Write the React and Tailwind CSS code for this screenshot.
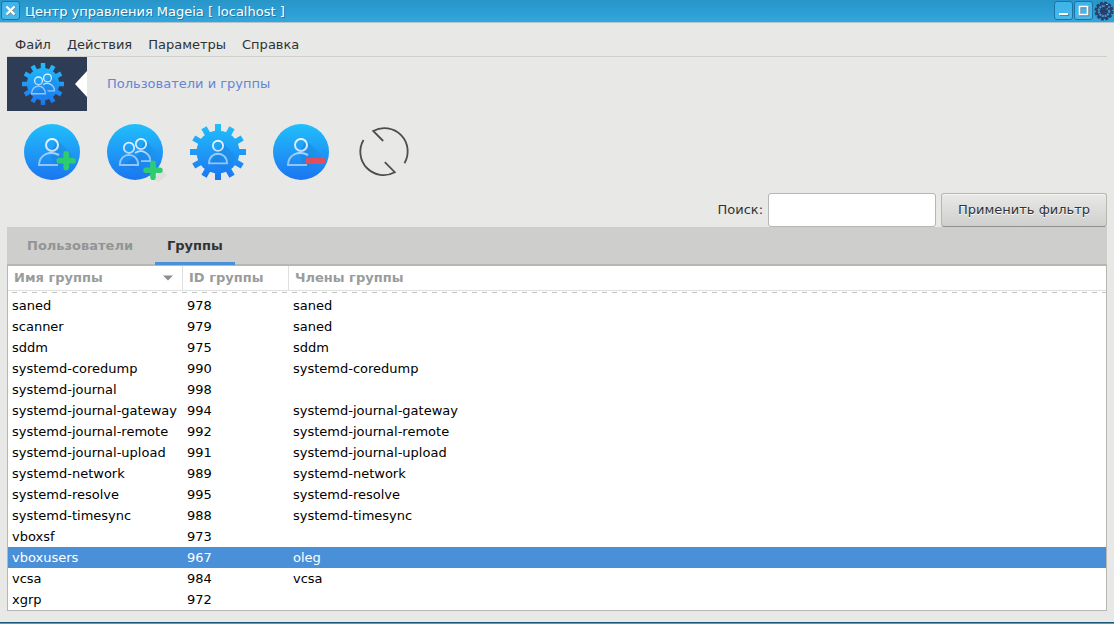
import React from 'react'

const groups = [
  { name: 'saned', id: 978, members: 'saned' },
  { name: 'scanner', id: 979, members: 'saned' },
  { name: 'sddm', id: 975, members: 'sddm' },
  { name: 'systemd-coredump', id: 990, members: 'systemd-coredump' },
  { name: 'systemd-journal', id: 998, members: '' },
  { name: 'systemd-journal-gateway', id: 994, members: 'systemd-journal-gateway' },
  { name: 'systemd-journal-remote', id: 992, members: 'systemd-journal-remote' },
  { name: 'systemd-journal-upload', id: 991, members: 'systemd-journal-upload' },
  { name: 'systemd-network', id: 989, members: 'systemd-network' },
  { name: 'systemd-resolve', id: 995, members: 'systemd-resolve' },
  { name: 'systemd-timesync', id: 988, members: 'systemd-timesync' },
  { name: 'vboxsf', id: 973, members: '' },
  { name: 'vboxusers', id: 967, members: 'oleg', selected: true },
  { name: 'vcsa', id: 984, members: 'vcsa' },
  { name: 'xgrp', id: 972, members: '' },
]

const menus = ['Файл', 'Действия', 'Параметры', 'Справка']

const teeth = [0, 30, 60, 90, 120, 150]

// Shared gradients, referenced by every icon on the page
const Gradients = () => (
  <svg className="absolute w-0 h-0" aria-hidden="true">
    <defs>
      <linearGradient id="blue" gradientUnits="userSpaceOnUse" x1="0" y1="0" x2="0" y2="56">
        <stop offset="0" stopColor="#21bffb" />
        <stop offset="1" stopColor="#1b75f0" />
      </linearGradient>
      <linearGradient id="shade" gradientUnits="userSpaceOnUse" x1="22" y1="22" x2="44" y2="44">
        <stop offset="0" stopColor="#1560b8" stopOpacity="0.35" />
        <stop offset="1" stopColor="#1560b8" stopOpacity="0" />
      </linearGradient>
      <linearGradient id="line" gradientUnits="userSpaceOnUse" x1="0" y1="14" x2="0" y2="42">
        <stop offset="0" stopColor="#f4fbff" />
        <stop offset="0.45" stopColor="#c4e1fd" />
        <stop offset="0.6" stopColor="#9bcbfb" />
        <stop offset="1" stopColor="#8fc3fa" />
      </linearGradient>
    </defs>
  </svg>
)

const Gear = () => (
  <g fill="url(#blue)">
    <path
      d={teeth
        .map((t) => {
          const a = (t * Math.PI) / 180
          const p = (x, y) =>
            `${(28 + x * Math.cos(a) - y * Math.sin(a)).toFixed(2)} ${(28 + x * Math.sin(a) + y * Math.cos(a)).toFixed(2)}`
          return `M${p(-3, -28)}L${p(3, -28)}L${p(3, -20)}L${p(-3, -20)}ZM${p(-3, 20)}L${p(3, 20)}L${p(3, 28)}L${p(-3, 28)}Z`
        })
        .join('')}
    />
    <circle cx="28" cy="28" r="21.5" />
  </g>
)

const UserFigure = () => (
  <>
    <path d="M33 16L49 31L42 46L30 42L27 28Z" fill="url(#shade)" />
    <g fill="none" stroke="url(#line)" strokeWidth="2">
      <circle cx="28" cy="21" r="6" />
      <path d="M35 31C26 26.5 15.5 30 15 41H34" />
    </g>
  </>
)

const PairFigure = () => (
  <>
    <path d="M38 16L52 30L46 40L34 48L16 41L32 30Z" fill="url(#shade)" />
    <g fill="none" stroke="url(#line)" strokeWidth="1.8">
      <circle cx="22" cy="23.8" r="5.2" />
      <path d="M12.8 41C12.800 27.500 31.200 27.500 31.200 41Z" />
      <circle cx="34" cy="20" r="5.2" />
      <path d="M28 29C35 24.5 43.3 29.5 43.3 37.1H34" />
    </g>
  </>
)

const Icon = ({ size = 56, children }) => (
  <svg width={size} height={size} viewBox="0 0 56 56" className="block overflow-visible" aria-hidden="true">
    {children}
  </svg>
)

const AddUserIcon = () => (
  <Icon>
    <circle cx="28" cy="28" r="28" fill="url(#blue)" />
    <UserFigure />
    <path d="M42.2 29.8V43.6M35.3 36.7H49.1" stroke="#2ecc71" strokeWidth="5.6" strokeLinecap="round" />
  </Icon>
)

const AddGroupIcon = () => (
  <Icon>
    <circle cx="28" cy="28" r="28" fill="url(#blue)" />
    <PairFigure />
    <path d="M54 45L60 51L52 58L46 56Z" fill="#000" opacity="0.04" />
    <path d="M46 39.4V53.2M39.1 46.2H52.9" stroke="#2ecc71" strokeWidth="5.6" strokeLinecap="round" />
  </Icon>
)

const EditIcon = () => (
  <Icon>
    <Gear />
    <path d="M33 19L47 33L37 47L20 40L27 28Z" fill="url(#shade)" />
    <g fill="none" stroke="url(#line)" strokeWidth="1.9">
      <circle cx="28" cy="21.8" r="5.1" />
      <path d="M19 39.4C19 26.5 37 26.5 37 39.4Z" />
    </g>
  </Icon>
)

const RemoveIcon = () => (
  <Icon>
    <circle cx="28" cy="28" r="28" fill="url(#blue)" />
    <UserFigure />
    <rect x="32.3" y="34" width="20" height="6" rx="2" fill="#e04f5f" />
  </Icon>
)

const RefreshIcon = () => (
  <Icon>
    <g fill="none" stroke="#4d4d4d" strokeWidth="1.8">
      <path d="M27.2 17L17.2 7A23.3 23.3 0 0 1 48.500 39.2" />
      <path d="M28.8 38.2L38.8 48.2A23.3 23.3 0 0 1 7.5 16" />
    </g>
  </Icon>
)

const tools = [
  { label: 'Добавить пользователя', icon: AddUserIcon },
  { label: 'Добавить группу', icon: AddGroupIcon },
  { label: 'Редактировать', icon: EditIcon },
  { label: 'Удалить', icon: RemoveIcon },
  { label: 'Обновить', icon: RefreshIcon },
]

const windowButton =
  'w-[19px] h-[19px] rounded-[3px] border border-[#1b75a4] bg-gradient-to-b from-[#3fb4ea] to-[#46b8ec] flex items-center justify-center'

const TitleBar = () => (
  <header className="h-[23px] flex items-center pl-px pb-px bg-gradient-to-b from-[#2795c8] to-[#32a6dd] border-b border-[#b5c4cb] text-white">
    <button aria-label="Закрыть" className={windowButton}>
      <svg width="13" height="13" viewBox="0 0 13 13">
        <path d="M3 3L11 11M11 3L3 11" stroke="#777" strokeWidth="2.4" />
        <path d="M2.5 2.5L10.5 10.5M10.5 2.500L2.500 10.500" stroke="#fff" strokeWidth="2.4" />
      </svg>
    </button>
    <h1 className="grow pl-[5px] pt-0.5 [text-shadow:1px_1px_0_#1f77a3]">Центр управления Mageia [ localhost ]</h1>
    <div className="flex items-center gap-px">
      <button aria-label="Свернуть" className={windowButton}>
        <svg width="13" height="13" viewBox="0 0 13 13">
          <path d="M3 10H12V12H3Z" fill="#777" />
          <path d="M2 9H11V11H2Z" fill="#fff" />
        </svg>
      </button>
      <button aria-label="Развернуть" className={windowButton}>
        <svg width="13" height="13" viewBox="0 0 13 13" fill="none">
          <path d="M3 3.5H11.5V11.5H3Z" stroke="#777" strokeWidth="1.6" />
          <path d="M2.5 2.5H10.500V10.500H2.500Z" stroke="#fff" strokeWidth="1.6" />
        </svg>
      </button>
      <button aria-label="Меню окна" className="w-5 h-5">
        <svg width="20" height="20" viewBox="0 0 20 20" fill="none">
          <circle cx="10" cy="10" r="8.5" stroke="#27406b" strokeWidth="2" strokeDasharray="3 1.45" />
          <circle cx="10" cy="10" r="8" fill="#27406b" />
          <circle cx="10" cy="10" r="5.2" stroke="#4794c8" strokeWidth="2.2" strokeDasharray="2 0.7" />
          <circle cx="10" cy="10" r="3" fill="#27406b" />
          <path d="M10 10L12 1L19 8Z" fill="#27406b" />
          <path d="M12 3.5H14M14 6H16M12.500 8H14" stroke="#7fb9e0" strokeWidth="1.2" />
        </svg>
      </button>
    </div>
  </header>
)

const Banner = () => (
  <div className="flex items-center">
    <div className="w-20 h-[54px] bg-[#2f3c56] flex items-center justify-between pl-[15px]">
      <Icon size={42}>
        <Gear />
        <PairFigure />
      </Icon>
      <svg width="12" height="26" viewBox="0 0 12 26" className="block">
        <path d="M12 0V26L0 13Z" fill="#fff" />
      </svg>
    </div>
    <h2 className="pl-5 text-[#5f87d7]">Пользователи и группы</h2>
  </div>
)

const GroupsTable = () => (
  <div className="bg-white border border-t-2 border-[#b6b6b3]">
    <table className="w-full table-fixed border-separate border-spacing-0 text-left text-black">
      <colgroup>
        <col className="w-[175px]" />
        <col className="w-[106px]" />
        <col />
      </colgroup>
      <thead>
        <tr className="h-[25px] text-[#999c9b]">
          <th className="py-0 pl-1.5 pr-2 font-bold border-r border-b border-[#dfdfdd]">
            <div className="flex items-center justify-between">
              Имя группы
              <svg width="12" height="6" viewBox="0 0 12 6" className="block">
                <path d="M1 0.5H11L6 5.5Z" fill="#8b8e8f" />
              </svg>
            </div>
          </th>
          <th className="py-0 px-1.5 font-bold border-r border-b border-[#dfdfdd]">ID группы</th>
          <th className="py-0 px-1.5 font-bold border-b border-[#dfdfdd]">Члены группы</th>
        </tr>
        <tr className="h-1">
          <td colSpan={3} className="p-0">
            <div className="h-1 pt-px pl-1">
              <div className="h-px bg-[repeating-linear-gradient(90deg,#c4c4c4_0_5px,transparent_5px_10px)]" />
            </div>
          </td>
        </tr>
      </thead>
      <tbody className="leading-5">
        {groups.map((g) => (
          <tr key={g.name} className={g.selected ? 'h-[21px] bg-[#4a90d9] text-white' : 'h-[21px]'}>
            <td className="pt-px pb-0 pl-1 whitespace-nowrap">{g.name}</td>
            <td className="pt-px pb-0 pl-1">{g.id}</td>
            <td className="pt-px pb-0 pl-1">{g.members}</td>
          </tr>
        ))}
      </tbody>
    </table>
  </div>
)

export default function App() {
  return (
    <div className="min-h-screen flex flex-col bg-[#e8e8e6] text-[#2e3436] text-[13px] leading-5 font-['DejaVu_Sans',sans-serif]">
      <Gradients />
      <TitleBar />
      <main className="grow px-[7px] pt-2.5 pb-2.5">
        <nav className="flex gap-4 px-2 pt-0.5 pb-px border-b border-[#cfcfcc]">
          {menus.map((m) => (
            <button key={m}>{m}</button>
          ))}
        </nav>
        <Banner />
        <div className="flex gap-[27px] pl-[17px] pt-[13px]">
          {tools.map(({ label, icon: ToolIcon }) => (
            <button key={label} aria-label={label}>
              <ToolIcon />
            </button>
          ))}
        </div>
        <form className="flex items-center justify-end gap-[5px] pt-[13px]" onSubmit={(e) => e.preventDefault()}>
          <label htmlFor="search">Поиск:</label>
          <input
            id="search"
            type="text"
            className="w-[168px] h-[34px] px-2 bg-white border border-[#b6b6b3] rounded-[3px] outline-none"
          />
          <button className="h-[34px] px-4 rounded-[3px] border border-[#b6b6b3] border-b-[#91918e] bg-gradient-to-b from-[#e9e9e7] to-[#cfcfcd] [text-shadow:0_1px_0_#fff] shadow-[inset_0_1px_0_#f6f6f5]">
            Применить фильтр
          </button>
        </form>
        <div role="tablist" className="flex h-[37px] pl-2 bg-[#cececc] font-bold">
          <button role="tab" aria-selected="false" className="px-3 text-[#929595]">
            Пользователи
          </button>
          <button role="tab" aria-selected="true" className="ml-2.5 px-3 relative">
            Группы
            <span className="absolute left-0 right-0 bottom-[-1px] h-[3px] bg-[#4a90d9]" />
          </button>
        </div>
        <GroupsTable />
      </main>
      <footer className="h-0.5 bg-[#3aa5d8] border-t border-[#1b5878]" />
    </div>
  )
}
